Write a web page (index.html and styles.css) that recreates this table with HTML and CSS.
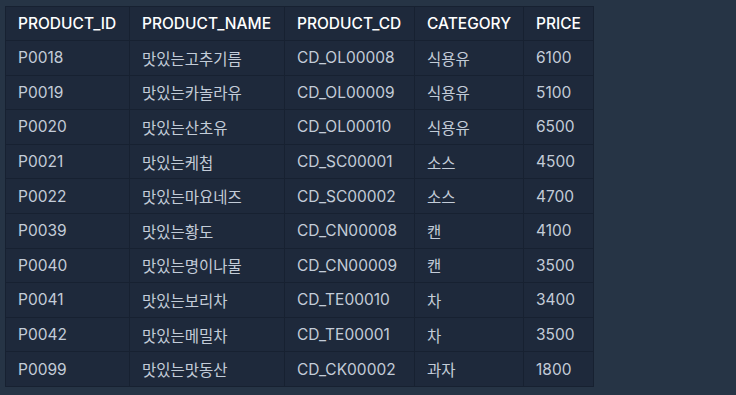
FILE: index.html
```html
<!DOCTYPE html>
<html lang="ko">
<head>
<meta charset="utf-8">
<link rel="stylesheet" href="styles.css">
</head>
<body>
<table class="grid">
<thead>
<tr><th class="c1">PRODUCT_ID</th><th class="c2">PRODUCT_NAME</th><th class="c3">PRODUCT_CD</th><th class="c4">CATEGORY</th><th class="c5">PRICE</th></tr>
</thead>
<tbody>
<tr><td>P0018</td><td>맛있는고추기름</td><td>CD_OL00008</td><td>식용유</td><td>6100</td></tr>
<tr><td>P0019</td><td>맛있는카놀라유</td><td>CD_OL00009</td><td>식용유</td><td>5100</td></tr>
<tr><td>P0020</td><td>맛있는산초유</td><td>CD_OL00010</td><td>식용유</td><td>6500</td></tr>
<tr><td>P0021</td><td>맛있는케첩</td><td>CD_SC00001</td><td>소스</td><td>4500</td></tr>
<tr><td>P0022</td><td>맛있는마요네즈</td><td>CD_SC00002</td><td>소스</td><td>4700</td></tr>
<tr><td>P0039</td><td>맛있는황도</td><td>CD_CN00008</td><td>캔</td><td>4100</td></tr>
<tr><td>P0040</td><td>맛있는명이나물</td><td>CD_CN00009</td><td>캔</td><td>3500</td></tr>
<tr><td>P0041</td><td>맛있는보리차</td><td>CD_TE00010</td><td>차</td><td>3400</td></tr>
<tr><td>P0042</td><td>맛있는메밀차</td><td>CD_TE00001</td><td>차</td><td>3500</td></tr>
<tr><td>P0099</td><td>맛있는맛동산</td><td>CD_CK00002</td><td>과자</td><td>1800</td></tr>
</tbody>
</table>
</body>
</html>
```
FILE: styles.css
```css
html, body {
  margin: 0;
  padding: 0;
  background: #263445;
}
body {
  padding: 6px 0 0 5px;
  font-family: Inter, "Noto Sans CJK KR", sans-serif;
  font-size: 15.5px;
}
.grid {
  border-collapse: collapse;
  background: #1e293b;
  table-layout: fixed;
  width: 588px;
}
.grid th, .grid td {
  border: 1px solid #172131;
  padding: 0 12px;
  height: 34.6px;
  text-align: left;
  white-space: nowrap;
  box-sizing: border-box;
}
.grid th {
  color: #ffffff;
  font-weight: 500;
  height: 34px;
}
.grid td {
  color: #c3ccd8;
  font-weight: 400;
}
.c1 { width: 124px; }
.c2 { width: 155px; }
.c3 { width: 130px; }
.c4 { width: 109px; }
.c5 { width: 70px; }
```
